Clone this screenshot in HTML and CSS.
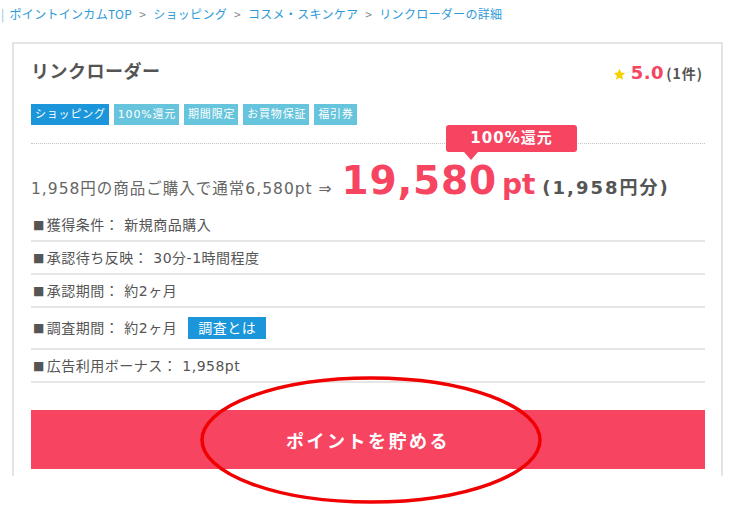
FILE: index.html
```html
<!DOCTYPE html>
<html lang="ja">
<head>
<meta charset="utf-8">
<title>リンクローダーの詳細</title>
<link rel="stylesheet" href="styles.css">
</head>
<body>
<div class="page">
  <nav class="crumbs">
    <span class="bar">|</span>
    <a class="crumb">ポイントインカムTOP</a>
    <span class="sep">&gt;</span>
    <a class="crumb">ショッピング</a>
    <span class="sep">&gt;</span>
    <a class="crumb">コスメ・スキンケア</a>
    <span class="sep">&gt;</span>
    <a class="crumb">リンクローダーの詳細</a>
  </nav>
  <div class="card">
    <div class="head">
      <h1 class="title">リンクローダー</h1>
      <div class="rating">
        <svg class="star" viewBox="0 0 24 24" width="13" height="13"><path d="M12 1.5l3.1 6.9 7.4.8-5.6 5 1.6 7.3L12 17.8 5.5 21.5l1.6-7.3-5.6-5 7.4-.8z" fill="#f7d000"/></svg>
        <span class="score">5.0</span><span class="count">(1件)</span>
      </div>
    </div>
    <div class="tags">
      <span class="tag main">ショッピング</span>
      <span class="tag">100%還元</span>
      <span class="tag">期間限定</span>
      <span class="tag">お買物保証</span>
      <span class="tag">福引券</span>
    </div>
    <div class="price">
      <div class="badge">100%還元</div>
      <p class="price-line"><span class="normal">1,958円の商品ご購入で通常6,580pt ⇒</span><span class="big">19,580</span><span class="unit">pt</span><span class="yen">(1,958円分)</span></p>
    </div>
    <ul class="conds">
      <li class="cond"><span class="sq">■</span>獲得条件： 新規商品購入</li>
      <li class="cond"><span class="sq">■</span>承認待ち反映： 30分-1時間程度</li>
      <li class="cond"><span class="sq">■</span>承認期間： 約2ヶ月</li>
      <li class="cond tall"><span class="sq">■</span>調査期間： 約2ヶ月<a class="about">調査とは</a></li>
      <li class="cond"><span class="sq">■</span>広告利用ボーナス： 1,958pt</li>
    </ul>
    <a class="cta">ポイントを貯める</a>
  </div>
</div>
<svg class="circle" viewBox="0 0 344 130" width="344" height="130"><ellipse cx="172" cy="65" rx="169" ry="62" fill="none" stroke="#f00000" stroke-width="3.5"/></svg>
</body>
</html>
```
FILE: styles.css
```css
html, body {
  margin: 0;
  padding: 0;
  background: #fff;
}
body {
  position: relative;
  width: 736px;
  height: 506px;
  overflow: hidden;
  font-family: "DejaVu Sans", "Noto Sans CJK JP", sans-serif;
  color: #555;
}
.page {
  height: 476px;
  overflow: hidden;
}
.crumbs {
  height: 28px;
  line-height: 28px;
  font-size: 12px;
  letter-spacing: 0.3px;
  font-family: "Noto Sans CJK JP", sans-serif;
  white-space: nowrap;
  padding-left: 1px;
}
.bar {
  color: #7cc0e8;
  margin-right: 2px;
}
.crumb {
  color: #2e9ad9;
}
.sep {
  color: #888;
  margin: 0 4px;
}
.card {
  box-sizing: border-box;
  width: 711px;
  margin: 14px 0 0 12px;
  border: 2px solid #e4e4e4;
  padding: 12px 16px 20px 17px;
}
.head {
  display: flex;
  justify-content: space-between;
  align-items: center;
}
.title {
  margin: 0;
  font-family: "Noto Sans CJK JP", sans-serif;
  font-size: 18px;
  line-height: 28px;
  font-weight: bold;
  letter-spacing: 0.5px;
  color: #555;
}
.rating {
  display: flex;
  align-items: baseline;
  margin-top: 5px;
  margin-right: 2px;
}
.star {
  margin-right: 5px;
  align-self: center;
  position: relative;
  top: 2px;
}
.score {
  font-size: 18px;
  font-weight: bold;
  letter-spacing: 0.5px;
  color: #f64461;
}
.count {
  font-family: "Noto Sans CJK JP", sans-serif;
  font-size: 14px;
  font-weight: bold;
  letter-spacing: 1px;
  color: #555;
  margin-left: 2px;
}
.tags {
  display: flex;
  gap: 5px;
  margin-top: 20px;
}
.tag {
  height: 21px;
  line-height: 21px;
  font-size: 11px;
  letter-spacing: 0.8px;
  padding: 0 3px 0 4px;
  color: #fff;
  background: #66c4dc;
}
.tag.main {
  background: #1b96db;
}
.price {
  position: relative;
  margin-top: 18px;
  border-top: 1px dotted #c4c4c4;
}
.badge {
  position: absolute;
  left: 415px;
  top: -19px;
  width: 131px;
  height: 27px;
  line-height: 27px;
  text-align: center;
  background: #f64461;
  color: #fff;
  font-size: 15px;
  font-weight: bold;
  letter-spacing: 1px;
  border-radius: 3px;
}
.badge::after {
  content: "";
  position: absolute;
  left: 18px;
  bottom: -8px;
  border-top: 8px solid #f64461;
  border-left: 7px solid transparent;
  border-right: 7px solid transparent;
}
.price-line {
  margin: 0;
  padding: 15px 0 6px;
  height: 44px;
  display: flex;
  align-items: baseline;
  line-height: 44px;
  white-space: nowrap;
}
.normal {
  font-size: 15.5px;
  color: #666;
  letter-spacing: 1px;
}
.big {
  margin-left: 9px;
  font-size: 39px;
  font-weight: bold;
  color: #f64461;
  letter-spacing: 0.8px;
}
.unit {
  margin-left: 5px;
  font-size: 28px;
  font-weight: bold;
  color: #f64461;
}
.yen {
  margin-left: 7px;
  font-size: 18px;
  font-weight: bold;
  color: #555;
  letter-spacing: 2px;
}
.conds {
  list-style: none;
  margin: 0;
  padding: 0;
}
.cond {
  display: flex;
  align-items: center;
  font-size: 14px;
  line-height: 20px;
  letter-spacing: 0.5px;
  padding: 6px 0 5px;
  border-bottom: 2px solid #e6e6e6;
  color: #555;
}
.sq {
  font-size: 12px;
  margin: 0 2px 0 2px;
  color: #555;
}
.cond.tall {
  padding: 9px 0 9px;
}
.about {
  margin-left: 11px;
  height: 22px;
  line-height: 22px;
  padding: 0 10px;
  background: #1b96db;
  color: #fff;
  font-size: 14px;
}
.cta {
  display: flex;
  justify-content: center;
  align-items: center;
  margin-top: 27px;
  height: 59px;
  background: #f64461;
  color: #fff;
  font-family: "Noto Sans CJK JP", sans-serif;
  font-size: 18px;
  font-weight: bold;
  letter-spacing: 2.5px;
}
.circle {
  position: absolute;
  left: 199px;
  top: 375px;
}
```
